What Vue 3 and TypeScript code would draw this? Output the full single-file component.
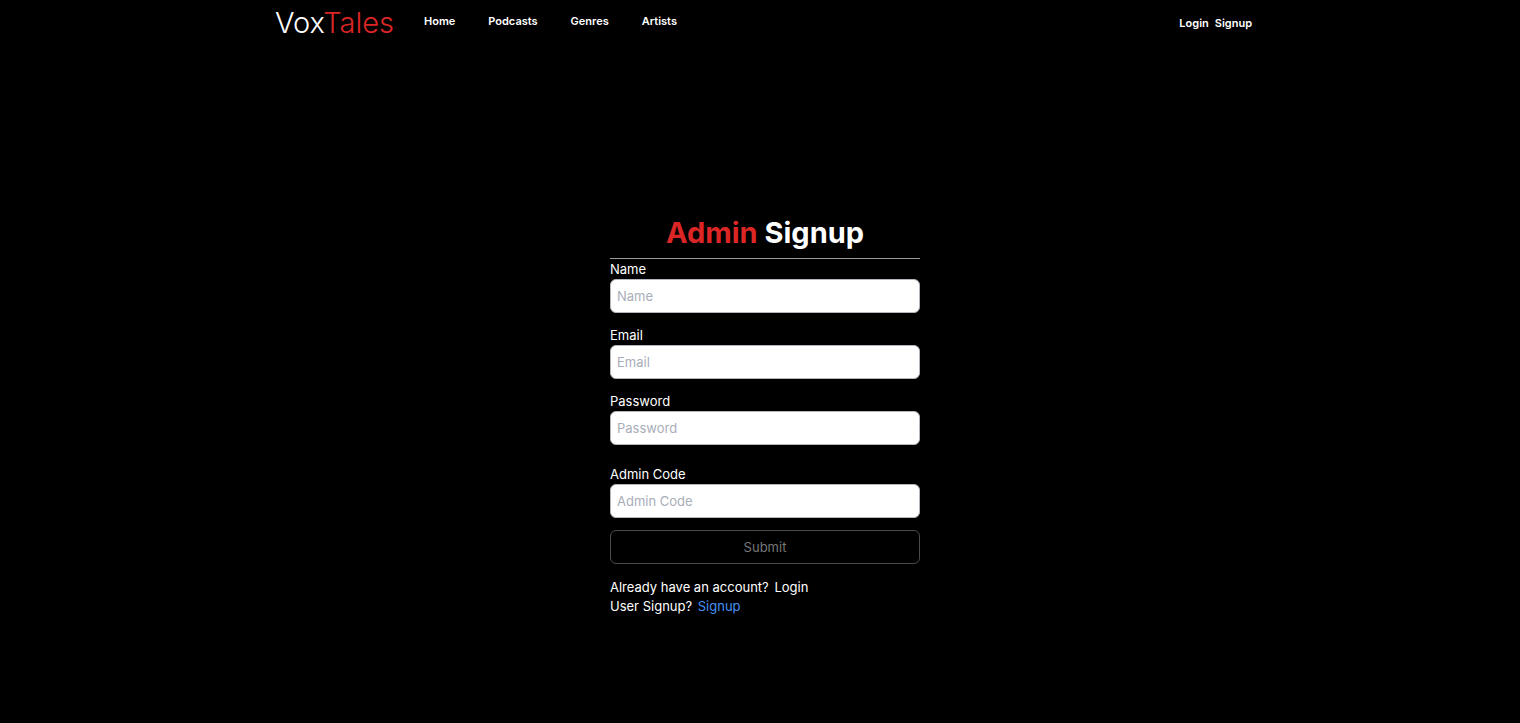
<script setup lang="ts">
import { reactive } from 'vue'

interface Field {
  key: 'name' | 'email' | 'password' | 'code'
  label: string
  type: string
}

const links: string[] = ['Home', 'Podcasts', 'Genres', 'Artists']
const fields: Field[] = [
  { key: 'name', label: 'Name', type: 'text' },
  { key: 'email', label: 'Email', type: 'email' },
  { key: 'password', label: 'Password', type: 'password' },
  { key: 'code', label: 'Admin Code', type: 'text' },
]
const form = reactive({ name: '', email: '', password: '', code: '' })
</script>

<template>
  <div class="page">
    <header class="bar">
      <a class="logo" href="#">Vox<span class="red">Tales</span></a>
      <nav class="links">
        <a v-for="link in links" :key="link" href="#">{{ link }}</a>
      </nav>
      <div class="account">
        <a href="#">Login</a>
        <a href="#">Signup</a>
      </div>
    </header>
    <main class="main">
      <form class="form" @submit.prevent>
        <h1><span class="red">Admin</span> Signup</h1>
        <div v-for="f in fields" :key="f.key" class="field" :class="f.key">
          <label :for="f.key">{{ f.label }}</label>
          <input :id="f.key" v-model="form[f.key]" :type="f.type" :placeholder="f.label" />
        </div>
        <button type="submit" disabled>Submit</button>
        <p class="first">Already have an account? <a href="#">Login</a></p>
        <p>User Signup? <a class="blue" href="#">Signup</a></p>
      </form>
    </main>
  </div>
</template>

<style>
body {
  margin: 0;
  background: #000;
}
</style>

<style scoped>
.page {
  min-height: 100vh;
  display: flex;
  flex-direction: column;
  background: #000;
  color: #fff;
  font: 13px/20px Inter, "Liberation Sans", sans-serif;
}
* {
  box-sizing: border-box;
}
a {
  color: inherit;
  text-decoration: none;
}
.red {
  color: #dc2626;
}
.bar {
  width: 100%;
  max-width: 1024px;
  height: 45px;
  margin: 0 auto;
  padding: 0 20px 0 27px;
  display: flex;
  align-items: center;
}
.logo {
  font-size: 29px;
  line-height: 36px;
  font-weight: 300;
}
.links {
  display: flex;
  gap: 33px;
  margin-left: 30px;
  padding-bottom: 3px;
  font-size: 11px;
  font-weight: 600;
}
.account {
  display: flex;
  gap: 6px;
  margin-left: auto;
  font-size: 11px;
  font-weight: 600;
}
.main {
  flex: 1;
  display: flex;
  justify-content: center;
  align-items: center;
  padding: 62px 0 0 10px;
}
.form {
  width: 310px;
}
h1 {
  margin: 0;
  padding-bottom: 7px;
  border-bottom: 1px solid #9a9a9a;
  text-align: center;
  font-size: 29px;
  line-height: 36px;
  font-weight: 700;
}
.field {
  display: flex;
  flex-direction: column;
  margin-bottom: 12px;
}
.field.password {
  margin-bottom: 19px;
}
input {
  width: 100%;
  height: 34px;
  padding: 0 6px;
  border: 1px solid #b4b7bd;
  border-radius: 6px;
  background: #fff;
  color: #111827;
  font: inherit;
}
input::placeholder {
  color: #a9adb8;
  opacity: 1;
}
button {
  display: block;
  width: 100%;
  height: 34px;
  border: 1px solid #4b4b4b;
  border-radius: 6px;
  background: transparent;
  color: #777;
  font: inherit;
}
p {
  margin: 0;
  line-height: 19px;
}
p a {
  margin-left: 2px;
}
.first {
  margin-top: 14px;
}
.blue {
  color: #4490f5;
}
</style>
